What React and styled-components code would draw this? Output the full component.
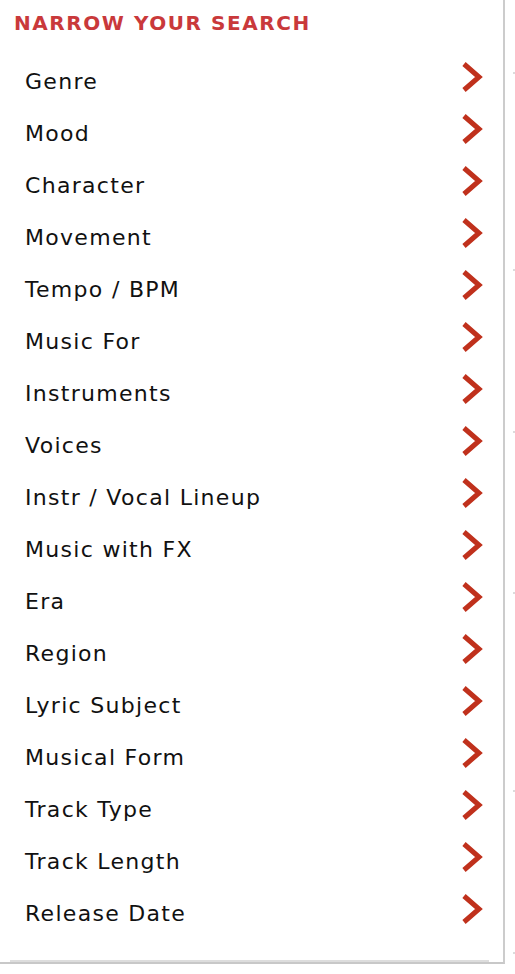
import React from "react";
import styled, { createGlobalStyle } from "styled-components";

const Global = createGlobalStyle`
  html, body { margin: 0; padding: 0; background: #fff; }
  body { font-family: "DejaVu Sans", Verdana, sans-serif; }
`;

const Page = styled.div`
  display: flex;
  align-items: flex-start;
`;

const Panel = styled.div`
  width: 503px;
  border-right: 2px solid #cccccc;
  border-bottom: 2px solid #c8c8c8;
  box-sizing: content-box;
`;

const Title = styled.h2`
  margin: 0;
  padding: 11px 0 0 14px;
  height: 31px;
  font-family: "DejaVu Sans", Verdana, sans-serif;
  font-weight: bold;
  font-size: 20px;
  line-height: 24px;
  color: #c9393b;
  letter-spacing: 1.55px;
`;

const List = styled.ul`
  list-style: none;
  padding: 13px 0 21px 0;
  border-bottom: 2px solid #dddddd;
  margin: 0 14px 0 10px;
`;

const Item = styled.li`
  display: flex;
  align-items: center;
  justify-content: space-between;
  height: 52px;
  padding: 0 6px 0 15px;
  font-size: 22px;
  letter-spacing: 1.3px;
  color: #111;
  cursor: pointer;
`;

const Label = styled.span`
  display: block;
`;

const Chevron = styled.svg`
  width: 22px;
  height: 32px;
  margin-top: -8px;
  flex: none;
`;

const Strip = styled.div`
  position: relative;
  width: 10px;
  height: 974px;
`;

const Dot = styled.span`
  position: absolute;
  left: 8px;
  width: 2px;
  height: 2px;
  background: #dcdcdc;
`;

const items = [
  "Genre",
  "Mood",
  "Character",
  "Movement",
  "Tempo / BPM",
  "Music For",
  "Instruments",
  "Voices",
  "Instr / Vocal Lineup",
  "Music with FX",
  "Era",
  "Region",
  "Lyric Subject",
  "Musical Form",
  "Track Type",
  "Track Length",
  "Release Date",
];

const dots = [72, 269, 431, 592, 790, 952];

export default function App() {
  return (
    <>
      <Global />
      <Page>
        <Panel>
          <Title>NARROW YOUR SEARCH</Title>
          <List>
            {items.map((t) => (
              <Item key={t}>
                <Label>{t}</Label>
                <Chevron viewBox="0 0 22 32">
                  <polyline
                    points="3,3 18,16 3,29"
                    fill="none"
                    stroke="#c0311c"
                    strokeWidth="5"
                  />
                </Chevron>
              </Item>
            ))}
          </List>
        </Panel>
        <Strip>
          {dots.map((y) => (
            <Dot key={y} style={{ top: y }} />
          ))}
        </Strip>
      </Page>
    </>
  );
}
